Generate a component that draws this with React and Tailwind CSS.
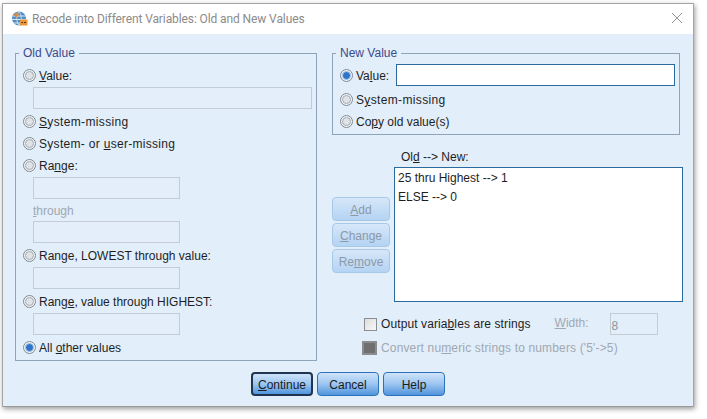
import React from 'react';

// SPSS "Old and New Values" dialog
const Radio = ({ on }) => (
    <svg width="13" height="13" viewBox="0 0 13 13" className="shrink-0">
        <circle cx="6.5" cy="6.5" r="6" fill="#f1f4f7" stroke="#7f8a94" />
        <circle cx="6.5" cy="6.5" r="4" fill={on ? '#2c73c9' : '#dfe3e7'} stroke={on ? '#a9c6e6' : '#a3abb2'} />
    </svg>
);

const Option = ({ on, className, children }) => (
    <label className={`flex items-center gap-[3px] h-[22px] ${className || ''}`}>
        <Radio on={on} />
        <span className="pt-[2px]">{children}</span>
    </label>
);

const Field = ({ wide }) => (
    <div className={`ml-[10px] mt-[1px] h-[22px] border border-[#c3ccd4] bg-[#e3eefa] ${wide ? 'w-[279px]' : 'w-[147px]'}`} />
);

const Group = ({ title, className, children }) => (
    <fieldset className={`border border-[#8ea5b8] pl-[7px] pt-[4px] ${className}`}>
        <legend className="-ml-[4px] px-[4px] leading-[14px] text-[#3b4a8c]">{title}</legend>
        {children}
    </fieldset>
);

const SideButton = ({ children }) => (
    <button className="w-[58px] h-[24px] pt-[1px] rounded-[4px] border border-[#a8c8e8] bg-gradient-to-b from-[#d6e7f9] to-[#b4d3f3] text-[#8d9aa6]">
        {children}
    </button>
);

const DialogButton = ({ focus, children }) => (
    <button className={`w-[62px] h-[24px] pt-[1px] rounded-[4px] border text-[#1c1c1c] bg-gradient-to-b from-[#cfe3f8] via-[#9cc5f0] to-[#4f94dd] ${focus ? 'border-[#1f3550] border-2' : 'border-[#2d72b8]'}`}>
        {children}
    </button>
);

const AppIcon = () => (
    <svg width="17" height="18" viewBox="0 0 17 18" className="shrink-0">
        <circle cx="8" cy="8.5" r="7" fill="#4f8fc9" />
        <path d="M1.5 6h13M1 9.5h14M2.5 13h11" stroke="#dbe8f2" strokeWidth="1" />
        <path d="M8 1.5c-3 4-3 10 0 14M8 1.5c3 4 3 10 0 14" stroke="#dbe8f2" strokeWidth="0.8" fill="none" />
        <path d="M5 2.5v5M2.5 5h5" stroke="#e8842c" strokeWidth="1.6" />
        <rect x="9" y="9.5" width="7.5" height="6" fill="#e8963c" />
        <path d="M10.5 12.5h1.5M13 12.5h2" stroke="#5a3310" strokeWidth="1" />
    </svg>
);

export default function App() {
    return (
        <div className="w-[707px] h-[419px] bg-white pl-[2px] pt-[3px] text-[12px] leading-[14px] text-[#1e1e1e] font-['Liberation_Sans',Arial,sans-serif]">
            <div className="w-[692px] h-[404px] flex flex-col border border-t-[#a5a5a5] border-x-[#a5a5a5] border-b-[#9a9a9a] bg-[#e2eefa] shadow-[1px_2px_5px_rgba(0,0,0,0.4)]">
                {/* title bar */}
                <div className="h-[30px] shrink-0 bg-white flex items-center pl-[8px] pr-[8px] gap-[4px]">
                    <AppIcon />
                    <span className="text-[#8b8b8b] font-['Roboto',sans-serif] text-[12px] tracking-[-0.1px]">Recode into Different Variables: Old and New Values</span>
                    <svg width="12" height="12" viewBox="0 0 12 12" className="ml-auto mr-[2px] mb-[2px]">
                        <path d="M1 1l10 10M11 1L1 11" stroke="#8c8c8c" strokeWidth="0.9" />
                    </svg>
                </div>

                <div className="flex gap-[15px] pl-[12px] pt-[12px]">
                    {/* left column */}
                    <Group title="Old Value" className="w-[302px] h-[315px]">
                        <Option><u>V</u>alue:</Option>
                        <Field wide />
                        <Option className="mt-[1px] tracking-[0.35px]"><u>S</u>ystem-missing</Option>
                        <Option className="tracking-[0.3px]">System- or <u>u</u>ser-missing</Option>
                        <Option>Ra<u>n</u>ge:</Option>
                        <Field />
                        <div className="ml-[10px] h-[21px] pt-[2px] flex items-center text-[#a0a8b0]"><u>t</u>hrough</div>
                        <Field />
                        <Option className="mt-[1px]">Ran<u>g</u>e, LOWEST through value:</Option>
                        <Field />
                        <Option className="mt-[1px]">Rang<u>e</u>, value through HIGHEST:</Option>
                        <Field />
                        <Option className="mt-[1px]" on>All <u>o</u>ther values</Option>
                    </Group>

                    {/* right column */}
                    <div className="w-[351px]">
                        <Group title="New Value" className="w-[348px] h-[89px]">
                            <div className="flex items-center h-[22px]">
                                <Option on>Va<u>l</u>ue:</Option>
                                <div className="ml-[7px] w-[279px] h-[22px] border border-[#2a6a9e] bg-white" />
                            </div>
                            <Option className="mt-[2px] tracking-[0.35px]">S<u>y</u>stem-missing</Option>
                            <Option>Co<u>p</u>y old value(s)</Option>
                        </Group>

                        <div className="flex gap-[4px] mt-[15px]">
                            <div className="flex flex-col gap-[2px] pt-[47px]">
                                <SideButton><u>A</u>dd</SideButton>
                                <SideButton><u>C</u>hange</SideButton>
                                <SideButton>Re<u>m</u>ove</SideButton>
                            </div>
                            <div>
                                <div className="ml-[7px] h-[14px] mb-[3px]">Ol<u>d</u> --&gt; New:</div>
                                <div className="w-[289px] h-[135px] border border-[#2a6a9e] bg-white pl-[3px] pt-[1px] leading-[19px]">
                                    <div>25 thru Highest --&gt; 1</div>
                                    <div>ELSE --&gt; 0</div>
                                </div>
                            </div>
                        </div>

                        <div className="flex items-center h-[22px] mt-[11px] ml-[32px]">
                            <span className="w-[13px] h-[13px] border border-[#8b8f93] bg-gradient-to-br from-[#dedede] to-[#f7f7f7]" />
                            <span className="ml-[4px] tracking-[0.1px]">Output varia<u>b</u>les are strings</span>
                            <span className="ml-[24px] mb-[2px] text-[#a0a8b0]"><u>W</u>idth:</span>
                            <div className="ml-[21px] w-[48px] h-[22px] border border-[#c3ccd4] pl-[1px] pt-[5px] text-[#8d959c]">8</div>
                        </div>
                        <div className="flex items-center h-[18px] mt-[4px] ml-[30px] text-[#a0a8b0]">
                            <span className="w-[15px] h-[14px] border-2 border-[#8c8c8c] bg-[#6f6f6f]" />
                            <span className="ml-[4px] tracking-[0.15px]">Convert nu<u>m</u>eric strings to numbers ('5'-&gt;5)</span>
                        </div>
                    </div>
                </div>

                <div className="flex justify-center gap-[4px] mt-[11px]">
                    <DialogButton focus><u>C</u>ontinue</DialogButton>
                    <DialogButton>Cancel</DialogButton>
                    <DialogButton>Help</DialogButton>
                </div>
            </div>
        </div>
    );
}
